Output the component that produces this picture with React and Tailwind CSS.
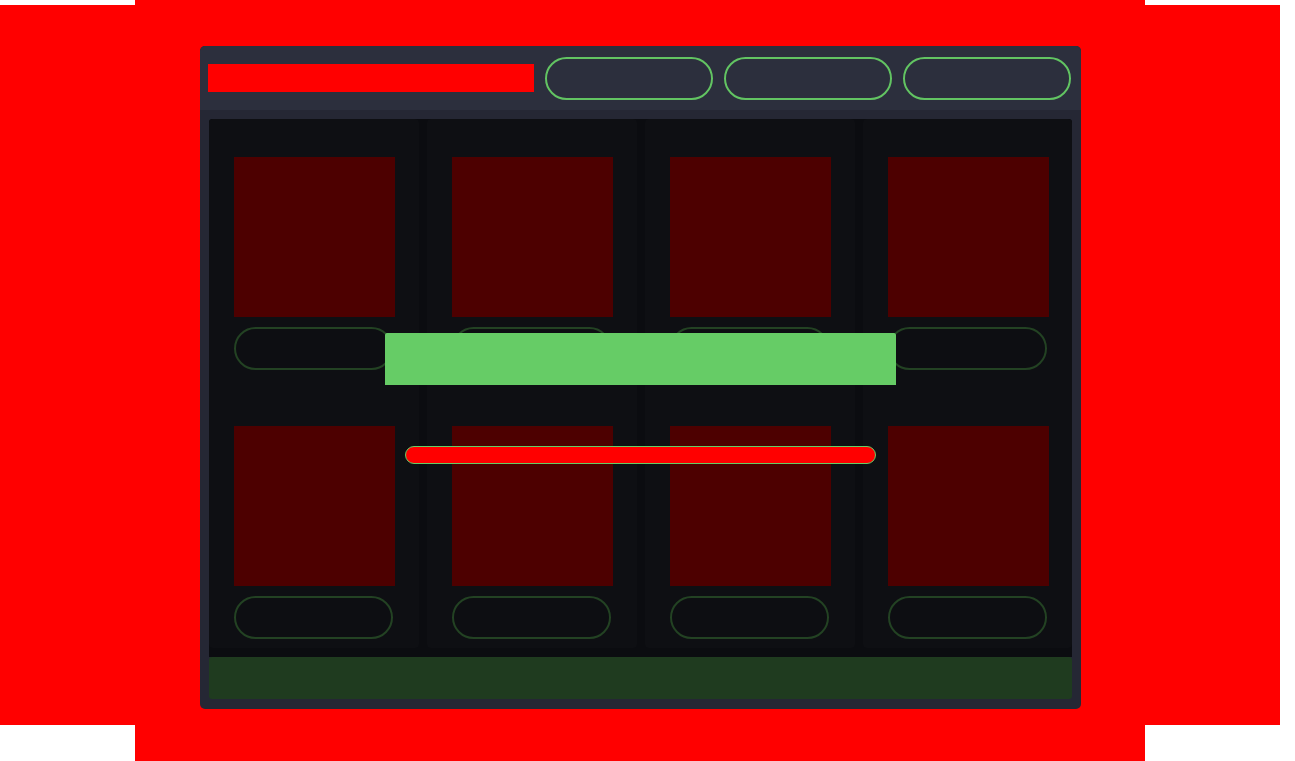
import React from 'react';

// Tablero: marco oscuro con cabecera, rejilla 4x2 de tarjetas y barra inferior.

const COLS = [0, 1, 2, 3];

function Cell() {
  return (
    <div className="flex flex-col gap-[10px]">
      <div className="w-[161px] h-[160px] bg-[#4d0000]" />
      <div className="w-[159px] h-[43px] rounded-full border-2 border-[#234223] bg-[#0d0e12]" />
    </div>
  );
}

function Column() {
  return (
    <div className="flex flex-col pt-[38px] pl-[25px] gap-[56px] h-[529px] rounded-[4px] bg-[#0e0f13]">
      <Cell />
      <Cell />
    </div>
  );
}

export default function App() {
  return (
    <div className="w-[1295px] h-[761px] bg-white flex overflow-hidden" style={{ fontFamily: '"Liberation Sans", sans-serif' }}>
      <div className="w-[135px] h-[720px] mt-[5px] bg-[#ff0000]" />
      <div className="w-[1010px] h-[761px] bg-[#ff0000] pt-[46px] pl-[65px]">
        <div className="relative w-[881px] h-[663px] rounded-[5px] bg-[#252734] flex flex-col overflow-hidden">
          {/* Cabecera */}
          <div className="h-[64px] bg-[#2c2f3d] flex items-center pl-[8px] pr-[10px] gap-[11px]">
            <div className="w-[326px] h-[28px] bg-[#ff0000]" />
            {COLS.slice(0, 3).map(i => (
              <div key={i} className="w-[168px] h-[43px] rounded-full border-2 border-[#62c462] bg-[#2c2f3d]" />
            ))}
          </div>

          {/* Cuerpo */}
          <div className="flex flex-col px-[9px] pt-[9px]">
            <div className="h-[538px] rounded-t-[3px] bg-[#0b0c10] grid grid-cols-[210px_210px_210px_209px] gap-2 content-start overflow-hidden">
              {COLS.map(i => <Column key={i} />)}
            </div>
            <div className="h-[42px] rounded-[3px] bg-[#1f3b1f]" />
          </div>

          {/* Superpuestos */}
          <div className="absolute left-[185px] top-[287px] w-[511px] h-[52px] rounded-t-[2px] bg-[#66cc66]" />
          <div className="absolute left-[205px] top-[400px] w-[471px] h-[18px] rounded-full border border-[#66cc66] bg-[#ff0000]" />
        </div>
      </div>
      <div className="w-[135px] h-[720px] mt-[5px] bg-[#ff0000]" />
    </div>
  );
}
